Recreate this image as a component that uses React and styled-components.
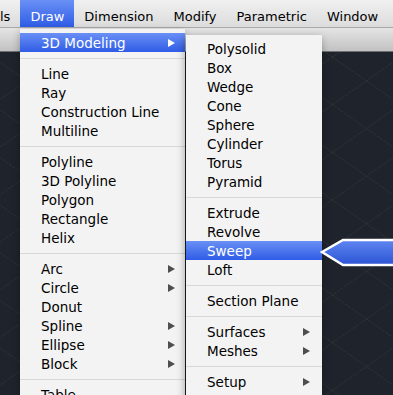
import React from 'react';
import styled, { createGlobalStyle } from 'styled-components';

const GlobalStyle = createGlobalStyle`
  html, body {
    margin: 0;
    padding: 0;
    background: #1f232b;
  }
`;

const Screen = styled.div`
  position: relative;
  width: 393px;
  height: 395px;
  overflow: hidden;
  font-family: "DejaVu Sans", "Noto Sans", sans-serif;
  background-color: #1f232b;
  background-image:
    repeating-linear-gradient(35deg, transparent 0 38px, rgba(255, 255, 255, 0.035) 38px 39px),
    repeating-linear-gradient(-35deg, transparent 0 38px, rgba(255, 255, 255, 0.035) 38px 39px);
`;

const MenuBar = styled.div`
  display: flex;
  height: 28px;
  align-items: stretch;
  background: linear-gradient(#f0f0f0, #dcdcdc);
  border-bottom: 1px solid #a9a9a9;
  box-sizing: border-box;
`;

const BarItem = styled.div`
  display: flex;
  align-items: center;
  padding: 5px 10px 0;
  margin-left: ${(p) => (p.$cut ? '-10px' : '0')};
  font-size: 13px;
  color: ${(p) => (p.$active ? '#fff' : '#000')};
  background: ${(p) => (p.$active ? 'linear-gradient(#6a90f5, #2f5ce6)' : 'transparent')};
`;

const ToolStrip = styled.div`
  height: 23px;
  background: linear-gradient(#e4e4e4, #c2c2c2);
  border-bottom: 1px solid #6d6f73;
`;

const Menu = styled.div`
  position: absolute;
  left: ${(p) => p.$left}px;
  top: ${(p) => p.$top}px;
  width: ${(p) => p.$width}px;
  padding-top: 4px;
  padding-bottom: 20px;
  background: #f3f3f3;
  box-shadow: ${(p) => (p.$sub ? '-1px 3px 8px rgba(0, 0, 0, 0.35)' : '0 3px 8px rgba(0, 0, 0, 0.3)')};
`;

const Row = styled.div`
  display: flex;
  align-items: center;
  justify-content: space-between;
  height: 19px;
  padding: 1px ${(p) => p.$right}px 0 21px;
  box-sizing: border-box;
  font-size: 13.5px;
  color: ${(p) => (p.$active ? '#fff' : '#000')};
  background: ${(p) => (p.$active ? 'linear-gradient(#6a90f5, #2f5ce6)' : 'transparent')};
  white-space: nowrap;
`;

const Arrow = styled.span`
  width: 0;
  height: 0;
  border-top: 4.5px solid transparent;
  border-bottom: 4.5px solid transparent;
  border-left: 7px solid ${(p) => (p.$light ? '#fff' : '#4e4e4e')};
`;

const Separator = styled.div`
  height: 12px;
  display: flex;
  align-items: center;

  &::after {
    content: '';
    flex: 1;
    height: 1px;
    background: #d8d8d8;
  }
`;

const Callout = styled.svg`
  position: absolute;
  left: 320px;
  top: 236px;
`;

const drawMenu = [
  [['3D Modeling', true, true]],
  [['Line'], ['Ray'], ['Construction Line'], ['Multiline']],
  [['Polyline'], ['3D Polyline'], ['Polygon'], ['Rectangle'], ['Helix']],
  [['Arc', true], ['Circle', true], ['Donut'], ['Spline', true], ['Ellipse', true], ['Block', true]],
  [['Table']],
];

const modelingMenu = [
  [['Polysolid'], ['Box'], ['Wedge'], ['Cone'], ['Sphere'], ['Cylinder'], ['Torus'], ['Pyramid']],
  [['Extrude'], ['Revolve'], ['Sweep', false, true], ['Loft']],
  [['Section Plane']],
  [['Surfaces', true], ['Meshes', true]],
  [['Setup', true]],
];

const MenuGroups = ({ groups, right }) =>
  groups.map((group, gi) => (
    <React.Fragment key={gi}>
      {gi > 0 && <Separator />}
      {group.map(([label, sub, active]) => (
        <Row key={label} $active={active} $right={right}>
          <span>{label}</span>
          {sub && <Arrow $light={active} />}
        </Row>
      ))}
    </React.Fragment>
  ));

const App = () => {
  return (
    <Screen>
      <GlobalStyle />
      <MenuBar>
        <BarItem $cut>ls</BarItem>
        <BarItem $active>Draw</BarItem>
        <BarItem>Dimension</BarItem>
        <BarItem>Modify</BarItem>
        <BarItem>Parametric</BarItem>
        <BarItem>Window</BarItem>
      </MenuBar>
      <ToolStrip />

      <Menu $left={20} $top={29} $width={165}>
        <MenuGroups groups={drawMenu} right={10} />
      </Menu>

      <Menu $left={186} $top={35} $width={136} $sub>
        <MenuGroups groups={modelingMenu} right={12} />
      </Menu>

      <Callout width="73" height="34" viewBox="0 0 73 34">
        <defs>
          <linearGradient id="calloutFill" x1="0" y1="0" x2="0" y2="1">
            <stop offset="0" stopColor="#5f86f0" />
            <stop offset="1" stopColor="#2b54d6" />
          </linearGradient>
        </defs>
        <polygon
          points="2,16 23,4 80,4 80,29 23,29"
          fill="url(#calloutFill)"
          stroke="#fff"
          strokeWidth="2.5"
          strokeLinejoin="miter"
        />
      </Callout>
    </Screen>
  );
};

export default App;
